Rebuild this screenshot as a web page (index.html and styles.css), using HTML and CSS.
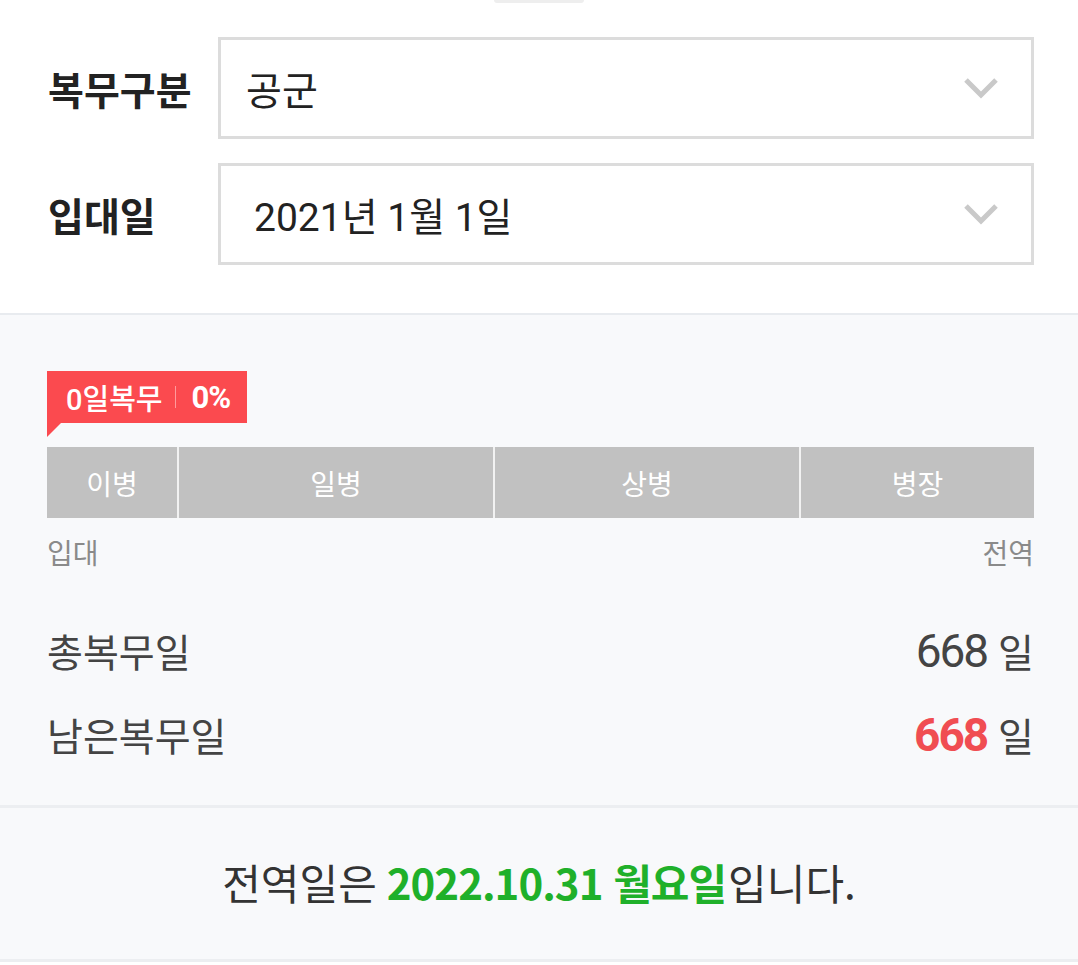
FILE: index.html
```html
<!DOCTYPE html>
<html lang="ko">
<head>
    <meta charset="UTF-8">
    <meta name="viewport" content="width=device-width, initial-scale=1.0">
    <title>전역일 계산기</title>
    <link rel="stylesheet" href="styles.css">
</head>
<body>
    <div class="handle"></div>

    <div class="form">
        <div class="field">
            <span class="field-label">복무구분</span>
            <div class="select">
                <span class="select-value">공군</span>
                <svg class="chevron" width="36" height="22" viewBox="0 0 36 22"><path d="M3 3 L18 18 L33 3" fill="none" stroke="#c9c9c9" stroke-width="5"/></svg>
            </div>
        </div>
        <div class="field">
            <span class="field-label">입대일</span>
            <div class="select">
                <span class="select-value date">2021년 1월 1일</span>
                <svg class="chevron" width="36" height="22" viewBox="0 0 36 22"><path d="M3 3 L18 18 L33 3" fill="none" stroke="#c9c9c9" stroke-width="5"/></svg>
            </div>
        </div>
    </div>

    <div class="summary">
        <div class="badge"><span class="badge-days">0일복무</span><span class="badge-sep"></span><span class="badge-pct">0%</span></div>

        <div class="ranks">
            <div class="rank rank-1">이병</div>
            <div class="rank rank-2">일병</div>
            <div class="rank rank-3">상병</div>
            <div class="rank rank-4">병장</div>
        </div>
        <div class="ends">
            <span>입대</span>
            <span>전역</span>
        </div>

        <div class="stat">
            <span class="stat-label">총복무일</span>
            <span class="stat-value"><b class="num">668</b> 일</span>
        </div>
        <div class="stat">
            <span class="stat-label">남은복무일</span>
            <span class="stat-value"><b class="num red">668</b> 일</span>
        </div>
    </div>

    <div class="result">
        전역일은 <b class="green">2022.10.31 월요일</b>입니다.
    </div>
</body>
</html>
```

FILE: styles.css
```css
body {
    margin: 0;
    width: 1078px;
    font-family: Roboto, "Noto Sans CJK KR", sans-serif;
    color: #333;
    background-color: #fff;
}
.handle {
    width: 90px;
    height: 3px;
    margin: 0 auto;
    background-color: #eee;
    border-radius: 0 0 3px 3px;
}
.form {
    padding: 34px 44px 48px 48px;
    display: flex;
    flex-direction: column;
    gap: 24px;
    border-bottom: 2px solid #e8ebef;
}
.field {
    display: flex;
    align-items: center;
}
.field-label {
    width: 170px;
    font-family: "Noto Sans CJK KR", sans-serif;
    font-size: 39px;
    font-weight: bold;
    color: #222;
}
.select {
    flex: 1;
    height: 96px;
    border: 3px solid #dcdcdc;
    display: flex;
    align-items: center;
    justify-content: space-between;
    padding: 0 32px 0 25px;
}
.select-value {
    font-family: "Noto Sans CJK KR", sans-serif;
    font-size: 39px;
    color: #222;
}
.select-value.date {
    padding-left: 8px;
    font-family: Roboto, "Noto Sans CJK KR", sans-serif;
}
.summary {
    background-color: #f8f9fb;
    padding: 56px 44px 43px 47px;
    border-bottom: 3px solid #eceef1;
}
.badge {
    position: relative;
    display: inline-flex;
    align-items: center;
    height: 52px;
    padding: 0 17px 0 19px;
    background-color: #fb4a4f;
    color: #fff;
    font-weight: bold;
}
.badge-days {
    font-size: 29px;
    font-weight: 500;
}
.badge-pct {
    font-size: 31px;
    letter-spacing: -1px;
}
.badge::after {
    content: "";
    position: absolute;
    left: 0;
    top: 52px;
    border-top: 14px solid #fb4a4f;
    border-right: 14px solid transparent;
}
.badge-sep {
    display: inline-block;
    width: 1px;
    height: 22px;
    margin: 0 16px 0 12px;
    background-color: #ff9a9c;
}
.ranks {
    display: flex;
    margin-top: 24px;
    height: 71px;
    background-color: #c1c1c1;
}
.rank {
    display: flex;
    align-items: center;
    justify-content: center;
    color: #fff;
    font-family: "Noto Sans CJK KR", sans-serif;
    font-size: 28px;
    border-left: 2px solid #f2f2f2;
}
.rank-1 { width: 130px; border-left: none; }
.rank-2 { width: 314px; }
.rank-3 { width: 304px; }
.rank-4 { flex: 1; }
.ends {
    display: flex;
    justify-content: space-between;
    margin-top: 14px;
    font-family: "Noto Sans CJK KR", sans-serif;
    font-size: 28px;
    color: #8a8a8a;
}
.stat {
    display: flex;
    justify-content: space-between;
    align-items: baseline;
    margin-top: 50px;
}
.stat + .stat {
    margin-top: 28px;
}
.stat-label {
    font-family: "Noto Sans CJK KR", sans-serif;
    font-size: 39px;
    color: #444;
}
.stat-value {
    font-family: "Noto Sans CJK KR", sans-serif;
    font-size: 39px;
    color: #444;
}
.num {
    font-family: Roboto, sans-serif;
    font-size: 46px;
    font-weight: normal;
    letter-spacing: -2px;
}
.num.red {
    color: #f04d52;
    font-weight: bold;
}
.result {
    background-color: #f8f9fb;
    height: 154px;
    padding-bottom: 4px;
    box-sizing: border-box;
    display: flex;
    align-items: center;
    justify-content: center;
    font-family: "Noto Sans CJK KR", sans-serif;
    font-size: 42px;
    color: #333;
    border-bottom: 3px solid #eceef1;
}
.green {
    color: #1fb02a;
    margin: 0 2px 0 10px;
    letter-spacing: -1px;
}
```
